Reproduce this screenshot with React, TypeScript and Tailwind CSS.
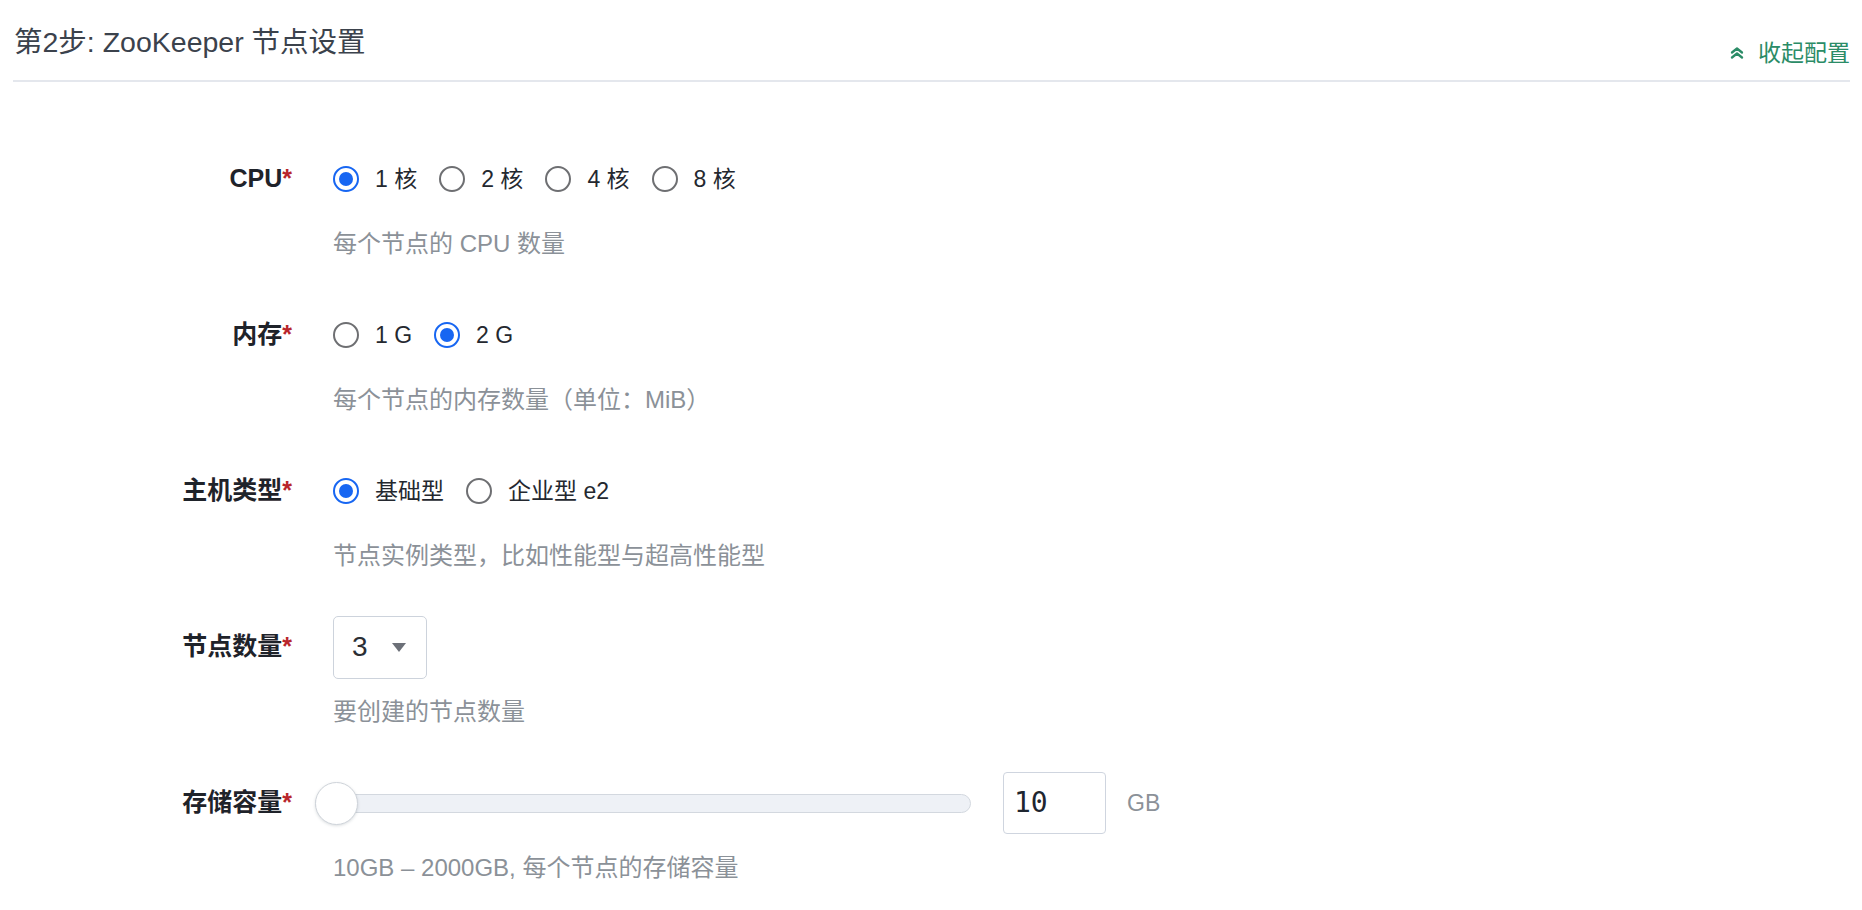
import type { ReactNode } from "react"

const FONT = { fontFamily: '"Liberation Sans", Arial, "Noto Sans CJK SC", sans-serif' }

function Radio({ checked, label }: { checked?: boolean; label: string }) {
  return (
    <label className="inline-flex items-center gap-[16px] cursor-pointer">
      {checked ? (
        <span className="flex h-[26px] w-[26px] items-center justify-center rounded-full border-[2.5px] border-[#1766f2] bg-white">
          <span className="h-[14px] w-[14px] rounded-full bg-[#1766f2]" />
        </span>
      ) : (
        <span className="h-[26px] w-[26px] rounded-full border-2 border-[#6e6f72] bg-white" />
      )}
      <span className="text-[23px] text-[#24282f]">{label}</span>
    </label>
  )
}

function Field({ label, desc, children }: { label: string; desc: string; children: ReactNode }) {
  return (
    <div className="grid grid-cols-[292px_1fr] gap-x-[41px]">
      <div className="flex h-[62px] items-center justify-end text-[25px] font-bold text-[#1f232a]">
        {label}
        <span className="text-[#b8262c]">*</span>
      </div>
      <div className="flex h-[62px] items-center">{children}</div>
      <div />
      <div className="mt-[19px] text-[24px] leading-[30px] text-[#8b9198]">{desc}</div>
    </div>
  )
}

export default function App() {
  return (
    <div className="min-h-[910px] w-full bg-white" style={FONT}>
      <div className="mx-[13px] mr-[12px] flex h-[82px] items-start justify-between border-b-2 border-[#e4e7ed] pt-[24px]">
        <h2 className="pl-[1px] text-[28.5px] font-normal leading-[36px] text-[#3b424c]">
          第2步: ZooKeeper 节点设置
        </h2>
        <button className="mt-[13px] flex items-center gap-[13px] text-[23px] leading-[32px] text-[#2b8c67]">
          <svg width="16" height="12" viewBox="0 0 16 12" fill="none" stroke="currentColor" strokeWidth="2.3" strokeLinecap="round" strokeLinejoin="round">
            <path d="M3 5.5 L8 1.5 L13 5.5" />
            <path d="M3 10.5 L8 6.5 L13 10.5" />
          </svg>
          收起配置
        </button>
      </div>

      <div className="flex flex-col gap-[45px] pt-[66px]">
        <Field label="CPU" desc="每个节点的 CPU 数量">
          <div className="flex items-center gap-[22px]">
            <Radio checked label="1 核" />
            <Radio label="2 核" />
            <Radio label="4 核" />
            <Radio label="8 核" />
          </div>
        </Field>

        <Field label="内存" desc="每个节点的内存数量（单位：MiB）">
          <div className="flex items-center gap-[22px]">
            <Radio label="1 G" />
            <Radio checked label="2 G" />
          </div>
        </Field>

        <Field label="主机类型" desc="节点实例类型，比如性能型与超高性能型">
          <div className="flex items-center gap-[22px]">
            <Radio checked label="基础型" />
            <Radio label="企业型 e2" />
          </div>
        </Field>

        <Field label="节点数量" desc="要创建的节点数量">
          <div className="flex h-[63px] w-[94px] items-center rounded-[5px] border-[1.5px] border-[#cdd3dc] pl-[18px]">
            <span className="w-[40px] text-[28px] text-[#2a2e35]">3</span>
            <span className="h-0 w-0 border-x-[7.5px] border-t-[9px] border-x-transparent border-t-[#6c7078]" />
          </div>
        </Field>

        <Field label="存储容量" desc="10GB – 2000GB, 每个节点的存储容量">
          <div className="ml-[-18px] flex items-center">
            <div className="relative flex h-[43px] w-[656px] items-center">
              <div className="h-[19px] w-full rounded-full border-[1.5px] border-[#d3d8df] bg-[#eef1f6]" />
              <div className="absolute left-0 top-0 h-[43px] w-[43px] rounded-full border-[1.5px] border-[#cfd4da] bg-white shadow-[0_1px_3px_rgba(60,80,90,0.18)]" />
            </div>
            <div className="ml-[32px] flex h-[62px] w-[103px] items-center rounded-[4px] border-[1.5px] border-[#cfd5df] pl-[10px]">
              <span className="text-[28px] text-[#1f2630]" style={{ fontFamily: '"DejaVu Sans Mono", monospace' }}>
                10
              </span>
            </div>
            <span className="ml-[21px] text-[23px] text-[#8b9198]">GB</span>
          </div>
        </Field>
      </div>
    </div>
  )
}
